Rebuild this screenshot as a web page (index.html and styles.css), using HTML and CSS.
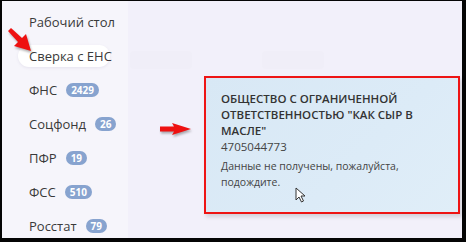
FILE: index.html
```html
<!DOCTYPE html>
<html lang="ru">
<head>
<meta charset="utf-8">
<link rel="stylesheet" href="styles.css">
</head>
<body>
<div class="frame">
  <nav class="sidebar">
    <div class="item">Рабочий стол</div>
    <div class="item active">Сверка с ЕНС</div>
    <div class="item">ФНС <span class="badge">2429</span></div>
    <div class="item">Соцфонд <span class="badge">26</span></div>
    <div class="item">ПФР <span class="badge">19</span></div>
    <div class="item">ФСС <span class="badge">510</span></div>
    <div class="item">Росстат <span class="badge">79</span></div>
  </nav>
  <main class="main">
    <div class="skeleton-row">
      <div class="sk sk-a"></div>
      <div class="sk sk-b"></div>
    </div>
    <section class="card">
      <div class="org">ОБЩЕСТВО С ОГРАНИЧЕННОЙ ОТВЕТСТВЕННОСТЬЮ "КАК СЫР В МАСЛЕ"</div>
      <div class="inn">4705044773</div>
      <div class="msg">Данные не получены, пожалуйста, подождите.</div>
    </section>
  </main>
  <svg class="arrow arrow-1" width="27" height="27" viewBox="0 0 27 27">
    <path d="M2 5 L5 2 L16 12 L20 8 L25 25 L8 20 L12 16 Z" fill="#ee1111"/>
  </svg>
  <svg class="arrow arrow-2" width="34" height="14" viewBox="0 0 34 14">
    <path d="M1 4.5 L15 4.5 L13 1 L32 7 L13 13 L15 9.5 L1 9.5 Z" fill="#ee1111"/>
  </svg>
  <svg class="cursor" width="11" height="16" viewBox="0 0 11 16">
    <path d="M1 1 L1 13 L4 10 L6.5 15 L8.5 14 L6 9 L10 9 Z" fill="#fff" stroke="#333" stroke-width="1" stroke-linejoin="round"/>
  </svg>
</div>
</body>
</html>
```
FILE: styles.css
```css
html, body {
  margin: 0;
  padding: 0;
  background: #000;
}
body {
  width: 466px;
  height: 242px;
  overflow: hidden;
  font-family: "Open Sans", "Liberation Sans", sans-serif;
  color: #333;
}
.frame {
  position: relative;
  box-sizing: border-box;
  width: 466px;
  height: 242px;
  border-style: solid;
  border-color: #050505;
  border-width: 1px 4px 4px 2px;
  background: #f2f0fa;
  display: flex;
}
.sidebar {
  width: 126px;
  flex: none;
  background: #f6f5fb;
  display: flex;
  flex-direction: column;
  gap: 12px;
  padding-top: 10px;
  box-sizing: border-box;
}
.item {
  height: 22px;
  display: flex;
  align-items: center;
  gap: 9px;
  padding-left: 27px;
  font-size: 13px;
  color: #3a3a3a;
  white-space: nowrap;
}
.item.active {
  margin-left: 16px;
  padding-left: 11px;
  width: 92px;
  box-sizing: border-box;
  background: #fff;
  border-radius: 11px;
  box-shadow: 0 1px 3px rgba(120, 110, 160, 0.12);
}
.badge {
  display: inline-block;
  height: 14px;
  line-height: 14px;
  padding: 0 5px;
  border-radius: 7px;
  background: #87a3cf;
  color: #fff;
  font-size: 10px;
  font-weight: 700;
}
.main {
  flex: 1;
  padding-left: 76px;
  padding-right: 1px;
  display: flex;
  flex-direction: column;
}
.skeleton-row {
  display: flex;
  gap: 70px;
  padding-top: 50px;
  height: 25px;
  box-sizing: content-box;
  margin-left: -74px;
}
.sk {
  height: 18px;
  background: #f0eef8;
  border-radius: 4px;
}
.sk-a { width: 62px; }
.sk-b { width: 62px; }
.card {
  box-sizing: border-box;
  width: 256px;
  height: 138px;
  border: 2px solid #ee1414;
  background: linear-gradient(135deg, #d8e8f5 0%, #dcebf7 60%, #e0eef8 100%);
  padding: 13px 15px 0 15px;
  box-shadow: 2px 3px 4px rgba(0, 0, 0, 0.13);
}
.org {
  font-size: 11.5px;
  font-weight: 600;
  line-height: 16px;
  color: #333;
  width: 210px;
}
.inn {
  font-size: 11.5px;
  line-height: 16px;
  color: #444;
}
.msg {
  margin-top: 3px;
  font-size: 10.5px;
  line-height: 16px;
  color: #444;
  width: 190px;
}
.arrow {
  position: absolute;
}
.arrow-1 {
  left: 4px;
  top: 25px;
  filter: drop-shadow(1px 2px 1px rgba(0,0,0,0.3));
}
.arrow-2 {
  left: 157px;
  top: 121px;
  filter: drop-shadow(1px 2px 1px rgba(0,0,0,0.3));
}
.cursor {
  position: absolute;
  left: 293px;
  top: 186px;
}
```
